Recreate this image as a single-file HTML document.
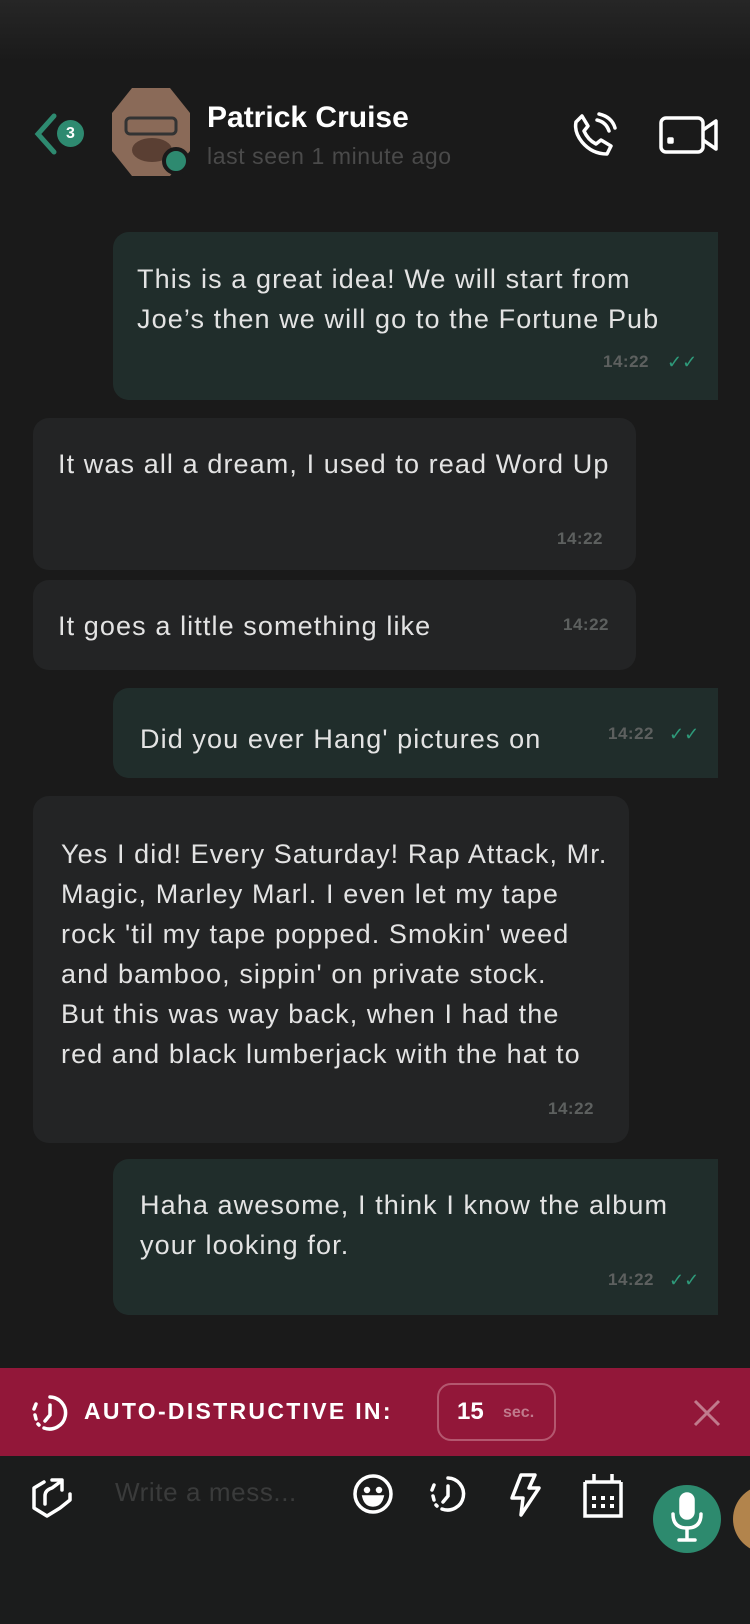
<!DOCTYPE html>
<html><head><meta charset="utf-8"><style>
*{margin:0;padding:0;box-sizing:border-box}
body{width:750px;height:1624px;background:#1a1a1a;font-family:"Liberation Sans",sans-serif;position:relative;overflow:hidden;color:#e6e6e6}
.abs{position:absolute}
.b{position:absolute;border-radius:16px}
.out{background:#202d2b;left:113px;width:605px;border-top-right-radius:0;border-bottom-right-radius:0}
.in{background:#232425;left:33px}
.t{position:absolute;font-size:27px;letter-spacing:1.1px;line-height:40px;color:#e3e3e3;white-space:nowrap}
.tm{position:absolute;font-size:17px;font-weight:bold;color:#5d605f;letter-spacing:0.5px}
</style></head><body>
<div class="abs" style="left:0;top:0;width:750px;height:62px;background:linear-gradient(#262626,#1a1a1a)"></div>
<svg class="abs" style="left:30px;top:112px" width="30" height="44"><path d="M24 4 L8 22 L24 40" stroke="#2e8a70" stroke-width="5" fill="none" stroke-linecap="round"/></svg>
<div class="abs" style="left:57px;top:120px;width:27px;height:27px;border-radius:50%;background:#2e8a70;color:#fff;font-weight:bold;font-size:16px;text-align:center;line-height:27px">3</div>
<svg class="abs" style="left:112px;top:88px" width="78" height="88"><polygon points="20,0 58,0 78,25 78,63 58,88 20,88 0,63 0,25" fill="#8a6a58"/><rect x="14" y="30" width="50" height="16" rx="4" fill="none" stroke="#333" stroke-width="3"/><ellipse cx="40" cy="62" rx="20" ry="12" fill="#5a3f33"/></svg>
<div class="abs" style="left:162px;top:147px;width:28px;height:28px;border-radius:50%;background:#2e8a70;border:4px solid #1a1a1a"></div>
<div class="abs" style="left:207px;top:101px;font-size:30px;font-weight:bold;color:#fff">Patrick Cruise</div>
<div class="abs" style="left:207px;top:143px;font-size:23px;letter-spacing:0.6px;color:#4a4a4a">last seen 1 minute ago</div>
<svg class="abs" style="left:572px;top:112px" width="46" height="46" fill="none" stroke="#fff" stroke-width="3.5" stroke-linecap="round" stroke-linejoin="round"><path d="M10 4 L16 14 L12 19 Q16 28 24 32 L29 28 L39 34 L35 42 Q20 42 10 30 Q2 20 4 10 Z"/><path d="M25 8 Q34 10 37 19"/><path d="M27 2 Q40 5 43 16"/></svg>
<svg class="abs" style="left:658px;top:115px" width="62" height="40" fill="none" stroke="#fff" stroke-width="3.5" stroke-linejoin="round"><rect x="3" y="3" width="42" height="34" rx="5"/><path d="M45 15 L58 6 L58 34 L45 25"/><rect x="11" y="24" width="3" height="3" fill="#fff"/></svg>

<div class="b out" style="top:232px;height:168px"></div>
<div class="t" style="left:137px;top:259px">This is a great idea! We will start from</div>
<div class="t" style="left:137px;top:299px">Joe’s then we will go to the Fortune Pub</div>
<div class="tm" style="left:603px;top:352px">14:22</div>
<div class="abs" style="left:667px;top:352px;color:#2e9a7a;font-size:18px">✓✓</div>

<div class="b in" style="top:418px;width:603px;height:152px"></div>
<div class="t" style="left:58px;top:444px">It was all a dream, I used to read Word Up</div>
<div class="tm" style="left:557px;top:529px">14:22</div>

<div class="b in" style="top:580px;width:603px;height:90px"></div>
<div class="t" style="left:58px;top:606px">It goes a little something like</div>
<div class="tm" style="left:563px;top:615px">14:22</div>

<div class="b out" style="top:688px;height:90px"></div>
<div class="t" style="left:140px;top:719px">Did you ever Hang' pictures on</div>
<div class="tm" style="left:608px;top:724px">14:22</div>
<div class="abs" style="left:669px;top:724px;color:#2e9a7a;font-size:18px">✓✓</div>

<div class="b in" style="top:796px;width:596px;height:347px"></div>
<div class="t" style="left:61px;top:834px">Yes I did! Every Saturday! Rap Attack, Mr.</div>
<div class="t" style="left:61px;top:874px">Magic, Marley Marl. I even let my tape</div>
<div class="t" style="left:61px;top:914px">rock 'til my tape popped. Smokin' weed</div>
<div class="t" style="left:61px;top:954px">and bamboo, sippin' on private stock.</div>
<div class="t" style="left:61px;top:994px">But this was way back, when I had the</div>
<div class="t" style="left:61px;top:1034px">red and black lumberjack with the hat to</div>
<div class="tm" style="left:548px;top:1099px">14:22</div>

<div class="b out" style="top:1159px;height:156px"></div>
<div class="t" style="left:140px;top:1185px">Haha awesome, I think I know the album</div>
<div class="t" style="left:140px;top:1225px">your looking for.</div>
<div class="tm" style="left:608px;top:1270px">14:22</div>
<div class="abs" style="left:669px;top:1270px;color:#2e9a7a;font-size:18px">✓✓</div>

<div class="abs" style="left:0;top:1368px;width:750px;height:88px;background:#921739"></div>
<svg class="abs" style="left:30px;top:1393px" width="40" height="40" fill="none" stroke="#fff" stroke-width="3.5" stroke-linecap="round"><path d="M20 4 A16 16 0 1 1 14 35"/><path d="M6 26 L5 22 M4 16 L6 11 M9 32 L8 31" /><path d="M20 12 L20 22 L15 28"/></svg>
<div class="abs" style="left:84px;top:1398px;font-size:23px;font-weight:bold;color:#fff;letter-spacing:2.3px">AUTO-DISTRUCTIVE IN:</div>
<div class="abs" style="left:437px;top:1383px;width:119px;height:58px;border:2px solid #b4576f;border-radius:14px"></div>
<div class="abs" style="left:457px;top:1398px;font-size:24px;font-weight:bold;color:#fff">15</div>
<div class="abs" style="left:503px;top:1404px;font-size:16px;font-weight:bold;color:#c07a8c">sec.</div>
<svg class="abs" style="left:692px;top:1398px" width="30" height="30" stroke="#c07a8c" stroke-width="3"><path d="M3 3 L27 27 M27 3 L3 27"/></svg>

<div class="abs" style="left:0;top:1456px;width:750px;height:168px;background:#1b1c1c"></div>
<svg class="abs" style="left:30px;top:1474px" width="44" height="44" fill="none" stroke="#fff" stroke-width="3.5" stroke-linejoin="round" stroke-linecap="round"><path d="M14 8 L4 14 L4 34 L17 42 L30 34 L40 26 L40 20"/><path d="M15 30 L15 22 Q15 16 22 14 L30 8"/><path d="M22 6 L32 6 L32 16"/></svg>
<div class="abs" style="left:115px;top:1477px;font-size:26px;letter-spacing:0.6px;color:#3a3b3b">Write a mess...</div>
<svg class="abs" style="left:352px;top:1473px" width="42" height="42" fill="none" stroke="#fff" stroke-width="3.5"><circle cx="21" cy="21" r="18"/><circle cx="15" cy="17" r="1.5" fill="#fff"/><circle cx="27" cy="17" r="1.5" fill="#fff"/><path d="M12 24 L30 24 Q28 32 21 32 Q14 32 12 24Z" fill="#fff"/></svg>
<svg class="abs" style="left:428px;top:1474px" width="40" height="40" fill="none" stroke="#fff" stroke-width="3.5" stroke-linecap="round"><path d="M20 4 A16 16 0 1 1 14 35"/><path d="M6 26 L5 22 M4 16 L6 11 M9 32 L8 31"/><path d="M20 12 L20 22 L15 28"/></svg>
<svg class="abs" style="left:507px;top:1472px" width="36" height="46" fill="none" stroke="#fff" stroke-width="3.5" stroke-linejoin="round"><path d="M14 3 L28 3 L22 16 L32 16 L14 43 L16 26 L5 26 Z"/></svg>
<svg class="abs" style="left:582px;top:1470px" width="42" height="48" fill="none" stroke="#fff" stroke-width="3.5"><path d="M3 12 L39 12 M3 12 L3 46 L39 46 L39 12"/><path d="M12 4 L12 12 M30 4 L30 12"/><g fill="#fff" stroke="none"><rect x="10" y="26" width="4" height="4"/><rect x="19" y="26" width="4" height="4"/><rect x="28" y="26" width="4" height="4"/><rect x="10" y="34" width="4" height="4"/><rect x="19" y="34" width="4" height="4"/><rect x="28" y="34" width="4" height="4"/></g></svg>
<div class="abs" style="left:653px;top:1485px;width:68px;height:68px;border-radius:50%;background:#2d8a6e"></div>
<svg class="abs" style="left:665px;top:1492px" width="44" height="56" fill="none" stroke="#fff" stroke-width="3.5" stroke-linecap="round"><rect x="16" y="2" width="12" height="24" rx="6" fill="#fff"/><path d="M8 22 Q8 36 22 36 Q36 36 36 22"/><path d="M22 36 L22 48 M14 48 L30 48"/></svg>
<div class="abs" style="left:733px;top:1485px;width:68px;height:68px;border-radius:50%;background:#b2844c"></div>
</body></html>
